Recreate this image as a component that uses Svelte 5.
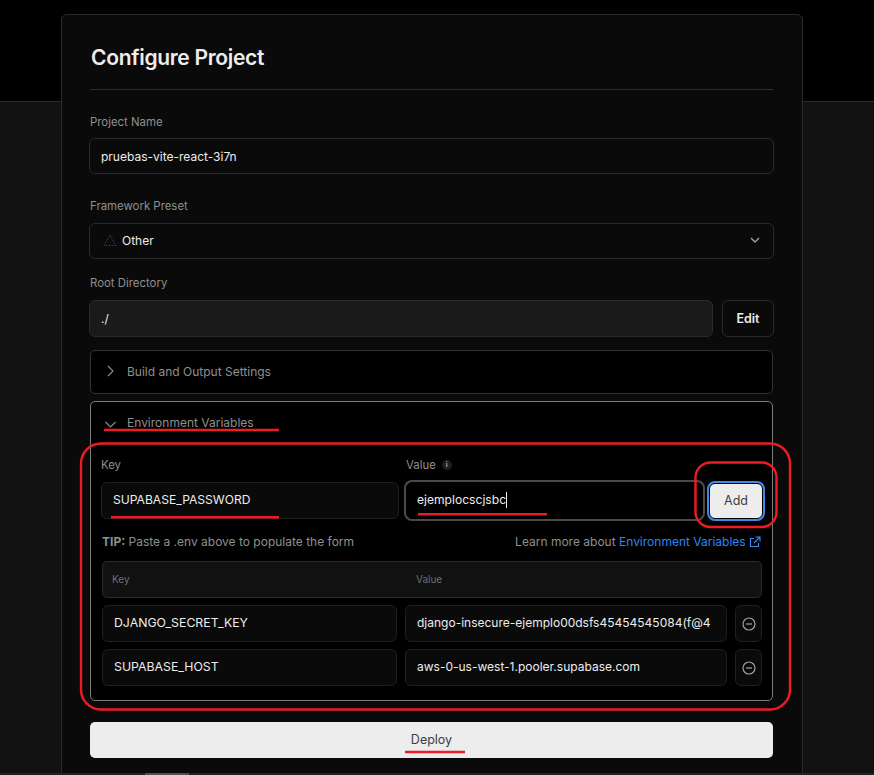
<script>
  let rootDir = './';
  const envVars = [
    { key: 'DJANGO_SECRET_KEY', value: 'django-insecure-ejemplo00dsfs45454545084(f@4' },
    { key: 'SUPABASE_HOST', value: 'aws-0-us-west-1.pooler.supabase.com' }
  ];
</script>

<div class="page">
  <div class="hero"></div>
  <div class="lower"></div>

  <main class="card">
    <h1>Configure Project</h1>
    <hr />

    <div class="label first">Project Name</div>
    <div class="field">pruebas-vite-react-3i7n</div>

    <div class="label preset">Framework Preset</div>
    <div class="field select">
      <svg class="tri" width="14" height="14" viewBox="0 0 14 14" fill="none" stroke="#4a4a4a" stroke-width="1" stroke-dasharray="1.5 1.5">
        <path d="M7 2 L13 12.5 H1 Z" />
      </svg>
      <span>Other</span>
      <svg class="caret" width="12" height="12" viewBox="0 0 12 12" fill="none" stroke="#a1a1a1" stroke-width="1.4">
        <path d="M2 4 L6 8 L10 4" />
      </svg>
    </div>

    <div class="label root">Root Directory</div>
    <div class="root-row">
      <div class="field disabled">{rootDir}</div>
      <button class="edit">Edit</button>
    </div>

    <section class="collapse closed">
      <svg width="12" height="12" viewBox="0 0 12 12" fill="none" stroke="#8f8f8f" stroke-width="1.1">
        <path d="M3 1 L8 6 L3 11" />
      </svg>
      <span>Build and Output Settings</span>
    </section>

    <section class="env">
      <div class="env-head">
        <svg width="12" height="12" viewBox="0 0 12 12" fill="none" stroke="#8f8f8f" stroke-width="1.1">
          <path d="M0.5 5 L5.5 10 L10.5 5" />
        </svg>
        <span>Environment Variables</span>
      </div>

      <div class="env-form">
        <div class="col-key">
          <div class="env-label">Key</div>
          <div class="env-input">SUPABASE_PASSWORD</div>
        </div>
        <div class="col-value">
          <div class="env-label">Value <i class="info">i</i></div>
          <div class="env-input focused">ejemplocscjsbc<b class="cursor"></b></div>
        </div>
        <button class="add">Add</button>
      </div>

      <div class="tip-row">
        <p><strong>TIP:</strong> Paste a .env above to populate the form</p>
        <p>
          Learn more about <a href="#env">Environment Variables</a>
          <svg width="12" height="12" viewBox="0 0 12 12" fill="none" stroke="#3b8cf0" stroke-width="1.1">
            <path d="M9.5 7 V10.5 H1.5 V2.5 H5 M6.5 1 H11 V5.5 M11 1 L5 7" />
          </svg>
        </p>
      </div>

      <div class="table-head">
        <span class="th-key">Key</span>
        <span>Value</span>
      </div>

      {#each envVars as row}
        <div class="row">
          <div class="cell key">{row.key}</div>
          <div class="cell val">{row.value}</div>
          <button class="remove" aria-label="Remove">
            <svg width="14" height="14" viewBox="0 0 14 14" fill="none" stroke="#a1a1a1" stroke-width="1.2">
              <circle cx="7" cy="7" r="6" />
              <path d="M4 7 H10" />
            </svg>
          </button>
        </div>
      {/each}
    </section>

    <button class="deploy">Deploy</button>
  </main>

  <div class="scrollbar"><div class="thumb"></div></div>

  <!-- hand drawn annotations on top of the screenshot -->
  <svg class="marks" width="874" height="775" viewBox="0 0 874 775" fill="none" stroke="#ed1c24" stroke-width="2.4">
    <rect x="81" y="443.5" width="709" height="266" rx="20" />
    <rect x="695.5" y="462.5" width="81" height="64.5" rx="15" />
    <path d="M104 430 H279 M111 517.3 H279 M418 514.3 H547 M405 752 H465" />
  </svg>
</div>

<style>
  :global(body) {
    margin: 0;
    background: #000;
  }

  .page {
    position: relative;
    width: 874px;
    height: 775px;
    overflow: hidden;
    background: #000;
    font-family: Inter, "Liberation Sans", sans-serif;
    color: #ededed;
  }

  .hero {
    height: 101px;
    background: #000;
    border-bottom: 1px solid #2a2a2a;
  }

  .lower {
    height: 673px;
    background: #111;
  }

  .card {
    position: absolute;
    top: 14px;
    left: 61px;
    width: 742px;
    height: 790px;
    box-sizing: border-box;
    padding: 0 27px;
    background: #0a0a0a;
    border: 1px solid #2a2a2a;
    border-radius: 6px;
  }

  h1 {
    margin: 28px 0 0 2px;
    font-size: 21px;
    line-height: 30px;
    font-weight: 600;
    letter-spacing: -0.3px;
    color: #ededed;
  }

  hr {
    margin: 16px 0 0 1px;
    width: 683px;
    height: 1px;
    border: 0;
    background: #2e2e2e;
  }

  .label {
    margin-left: 1px;
    font-size: 11.4px;
    line-height: 16px;
    color: #8f8f8f;
  }

  .label.first {
    margin-top: 24px;
  }

  .label.preset {
    margin-top: 24px;
  }

  .label.root {
    margin-top: 16px;
  }

  .field {
    display: flex;
    align-items: center;
    box-sizing: border-box;
    width: 685px;
    height: 36px;
    margin-top: 8px;
    padding: 0 11px;
    font-size: 12px;
    color: #ededed;
    border: 1px solid #2a2a2a;
    border-radius: 6px;
  }

  .select {
    gap: 5px;
    margin-top: 9px;
    padding-left: 13px;
    padding-bottom: 2px;
  }

  .caret {
    margin-left: auto;
    margin-right: 1px;
  }

  .root-row {
    display: flex;
    gap: 9px;
    width: 685px;
    margin-top: 9px;
  }

  .root-row .field {
    flex: 1;
    width: auto;
    height: 37px;
    margin-top: 0;
  }

  .disabled {
    background: #1a1a1a;
  }

  .edit {
    width: 52px;
    height: 37px;
    padding: 0;
    font: 600 12.5px Inter, "Liberation Sans", sans-serif;
    color: #ededed;
    background: #0a0a0a;
    border: 1px solid #2a2a2a;
    border-radius: 6px;
  }

  .collapse {
    display: flex;
    align-items: center;
    gap: 10px;
    box-sizing: border-box;
    width: 683px;
    height: 44px;
    margin: 13px 0 0 1px;
    padding: 0 0 2px 14px;
    font-size: 12px;
    color: #8f8f8f;
    background: #000;
    border: 1px solid #333;
    border-radius: 5px;
  }

  .env {
    box-sizing: border-box;
    width: 683px;
    height: 300px;
    margin: 7px 0 0 1px;
    background: #000;
    border: 1px solid #7c7c7c;
    border-radius: 5px;
  }

  .env-head {
    display: flex;
    align-items: center;
    gap: 10px;
    height: 41px;
    padding-left: 14px;
    font-size: 12px;
    color: #8f8f8f;
  }

  .env-form {
    display: flex;
    align-items: flex-end;
    margin-top: 14px;
    padding-left: 10px;
  }

  .col-key {
    width: 298px;
  }

  .col-value {
    width: 297px;
    margin-left: 7px;
  }

  .env-label {
    display: flex;
    align-items: center;
    gap: 6px;
    margin-bottom: 9px;
    font-size: 11.4px;
    line-height: 16px;
    color: #8f8f8f;
  }

  .info {
    display: inline-block;
    width: 10px;
    height: 10px;
    border-radius: 50%;
    background: #1f1f1f;
    color: #a1a1a1;
    font-size: 7px;
    font-weight: 700;
    font-style: normal;
    line-height: 10px;
    text-align: center;
  }

  .env-input {
    display: flex;
    align-items: center;
    box-sizing: border-box;
    height: 37px;
    padding: 0 11px 2px;
    font-size: 12.1px;
    color: #ededed;
    background: #0a0a0a;
    border: 1px solid #1f1f1f;
    border-radius: 6px;
  }

  .env-input.focused {
    padding-left: 10px;
    background: #000;
    border-color: #000;
    box-shadow: 0 0 0 2px #4a4a4a;
  }

  .cursor {
    display: inline-block;
    width: 1px;
    height: 16px;
    background: #ededed;
  }

  .add {
    width: 54px;
    height: 36px;
    margin-left: 6px;
    padding: 0 0 2px;
    font: 400 12.5px Inter, "Liberation Sans", sans-serif;
    color: #3d3d3d;
    background: #ededed;
    border: 1px solid #000;
    border-radius: 6px;
    box-shadow: 0 0 0 2px #3b8ae6;
  }

  .tip-row {
    display: flex;
    justify-content: space-between;
    margin-top: 15px;
    padding: 0 11px;
    font-size: 12px;
    line-height: 16px;
    color: #8f8f8f;
  }

  .tip-row p {
    margin: 0;
  }

  .tip-row svg {
    vertical-align: -2px;
  }

  .tip-row a {
    color: #2e86f0;
    text-decoration: none;
  }

  .table-head {
    display: flex;
    align-items: center;
    box-sizing: border-box;
    width: 660px;
    height: 37px;
    margin: 11px 0 0 11px;
    padding-bottom: 2px;
    font-size: 10px;
    color: #6f6f6f;
    background: #111;
    border: 1px solid #2a2a2a;
    border-radius: 5px;
  }

  .th-key {
    width: 304px;
    padding-left: 9px;
  }

  .row {
    display: flex;
    gap: 8px;
    margin: 7px 0 0 11px;
  }

  .cell {
    display: flex;
    align-items: center;
    box-sizing: border-box;
    height: 37px;
    padding: 0 11px 2px;
    overflow: hidden;
    white-space: nowrap;
    font-size: 12.3px;
    color: #ededed;
    background: #0a0a0a;
    border: 1px solid #1f1f1f;
    border-radius: 6px;
  }

  .cell.key {
    width: 295px;
  }

  .cell.val {
    width: 322px;
    font-size: 12px;
  }

  .remove {
    display: flex;
    align-items: center;
    justify-content: center;
    width: 27px;
    height: 37px;
    padding: 0;
    background: #0a0a0a;
    border: 1px solid #1f1f1f;
    border-radius: 6px;
  }

  .deploy {
    display: block;
    width: 683px;
    height: 36px;
    margin: 21px 0 0 1px;
    padding: 0 0 2px;
    font: 400 12.5px Inter, "Liberation Sans", sans-serif;
    color: #3d3d3d;
    background: #ededed;
    border: 0;
    border-radius: 5px;
  }

  .scrollbar {
    position: absolute;
    left: 0;
    right: 0;
    bottom: 0;
    height: 2px;
    background: #222;
  }

  .thumb {
    width: 44px;
    height: 2px;
    margin-left: 145px;
    background: #4f4f4f;
  }

  .marks {
    position: absolute;
    top: 0;
    left: 0;
    pointer-events: none;
  }
</style>
